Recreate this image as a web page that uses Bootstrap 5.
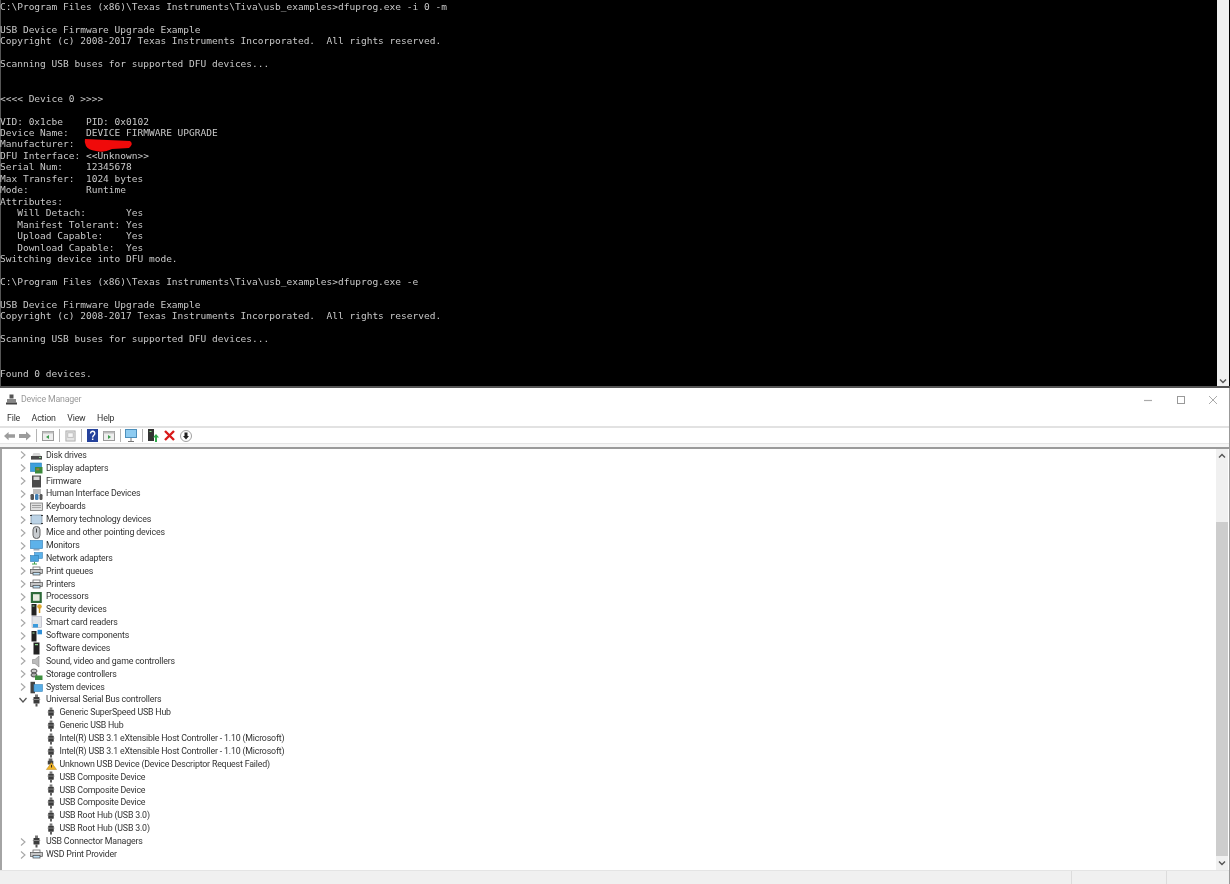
<!DOCTYPE html>
<html lang="en">
<head>
<meta charset="utf-8">
<title>Device Manager</title>
<link href="https://cdn.jsdelivr.net/npm/bootstrap@5.3.0/dist/css/bootstrap.min.css" rel="stylesheet">
<style>
html,body{height:884px;overflow:hidden;background:#fff}
.screen{width:1230px;height:884px}
.console-win{height:388px;background:#000;border-bottom:2px solid #555;box-shadow:inset 1px 0 #555;position:relative}
.cmd-out{flex:1;margin:0;padding-top:1px;overflow:hidden;color:#c8c8c8;font:9.52px/11.45px "DejaVu Sans Mono",monospace;white-space:pre;filter:blur(.3px)}
.con-scroll{width:12px;background:#f0f0f0;margin-right:1px}
.redact{position:absolute;left:82px;top:138px;width:52px;height:15px}
.dm-win{flex:1;min-height:0;font-family:Roboto,"Noto Sans",sans-serif;font-size:8.8px;letter-spacing:-.18px;color:#333;border-right:1px solid #999}
.dm-text{filter:blur(.25px)}
.title-row{height:23px;padding-left:6px;gap:4px;background:#fff;color:#9a9a9a;font-size:8.8px;flex:none}
.wctl{margin-left:auto;width:73px;margin-right:12px;color:#999}
.menu-row{height:17px;padding-left:7px;gap:11.5px;flex:none;border-bottom:2px solid #e2e2e2}
.tool-row{height:16px;padding-left:3.5px;gap:4.9px;flex:none;background:#fff;border-bottom:1px solid #e6e6e6}
.tool-sep{width:1px;height:13px;background:#b4b4b4}
.tool-gap{height:5px;flex:none;background:#f6f6f6;border-bottom:2px solid #9a9a9a}
.tree-zone{flex:1;min-height:0;border-left:2px solid #a4a4a4}
.tree-list{flex:1;margin:0;padding:0;list-style:none;overflow:hidden}
.tree-item{height:12.887px;padding-left:16px;white-space:nowrap}
.tree-item.sub{padding-left:42.500px}
.exp{width:10px;flex:none;margin-right:2px}
.tree-item.sub .exp{display:none}
.tree-ico{width:13px;height:13px;flex:none;margin-right:3px}
.tree-item.sub .tree-ico{width:12px;height:12px;margin-right:3px}
.tree-scroll{width:12px;flex:none;background:#f0f0f0;margin-right:1px}
.thumb{height:334px;background:#cdcdcd;margin-top:auto}
.arrow-box{height:14px;flex:none}
.status-row{height:14px;flex:none;background:#f0f0f0;border-top:1px solid #e4e4e4}
.status-cell{border-right:1px solid #dcdcdc}
.st-mid{width:95px}.st-end{width:62px}
</style>
</head>
<body>
<svg width="0" height="0" class="position-absolute">
<defs>
<symbol id="disk" viewBox="0 0 13 13"><path d="M2 7l1.500-3h6L11 7z" fill="#d8d8d8"/><rect x="1" y="7" width="11" height="3.600" fill="#4a4a4a"/><rect x="9" y="8" width="2" height="1" fill="#8fd08f"/></symbol>
<symbol id="display" viewBox="0 0 13 13"><rect x=".5" y="1" width="11" height="8.500" fill="#3f9fdc" stroke="#2b7fb5" stroke-width=".6"/><rect x="5" y="5" width="7.500" height="6.500" fill="#3c8a3c"/><rect x="6.300" y="6.300" width="3" height="2" fill="#9c7b3b"/></symbol>
<symbol id="firmware" viewBox="0 0 13 13"><rect x="2" y=".5" width="9" height="12" fill="#4b4b4b"/><rect x="3.500" y="1.600" width="6" height="3.400" fill="#d9d9d9"/></symbol>
<symbol id="hid" viewBox="0 0 13 13"><path d="M3 1h8v5H3z" fill="#bdbdbd"/><rect x=".5" y="6" width="3.500" height="6" rx="1.300" fill="#555"/><rect x="5" y="6" width="3.500" height="6" rx="1.300" fill="#3f7fb5"/><rect x="9.500" y="6" width="3" height="6" rx="1.200" fill="#555"/></symbol>
<symbol id="keyb" viewBox="0 0 13 13"><rect x=".5" y="3" width="12" height="7.500" fill="#e0e0e0" stroke="#777" stroke-width=".8"/><rect x="2" y="5" width="9" height="1" fill="#999"/><rect x="2" y="7" width="9" height="1" fill="#aaa"/></symbol>
<symbol id="memory" viewBox="0 0 13 13"><rect x="1" y="2" width="11" height="9" fill="#bcd3e6" stroke="#6b7f8f" stroke-width=".6"/><path d="M0 2.500h2M0 10.500h2M11 2.500h2M11 10.500h2" stroke="#333"/></symbol>
<symbol id="mouse" viewBox="0 0 13 13"><rect x="3" y=".5" width="7" height="12" rx="3.300" fill="#c8ccd0" stroke="#555" stroke-width=".9"/><rect x="6" y="2.500" width="1" height="4" fill="#444"/></symbol>
<symbol id="monitor" viewBox="0 0 13 13"><rect x=".5" y="1.500" width="12" height="8" fill="#5db2ea" stroke="#3c87bd" stroke-width=".7"/><rect x="3.500" y="10" width="6" height="1.500" fill="#9ab"/></symbol>
<symbol id="network" viewBox="0 0 13 13"><rect x="4.500" y=".5" width="8" height="6" fill="#5db2ea" stroke="#3c87bd" stroke-width=".6"/><rect x=".5" y="3.500" width="8" height="6" fill="#4aa4e0" stroke="#2f7cb0" stroke-width=".6"/><path d="M4.500 10v2M2 12h5" stroke="#3fa04a"/></symbol>
<symbol id="printer" viewBox="0 0 13 13"><rect x="3" y="2" width="7" height="2.500" fill="#fff" stroke="#555" stroke-width=".7"/><rect x=".5" y="4.500" width="12" height="4" fill="#c6c6c6" stroke="#555" stroke-width=".7"/><rect x="3" y="7.500" width="7" height="2.500" fill="#bfe0f5" stroke="#444" stroke-width=".7"/></symbol>
<symbol id="cpu" viewBox="0 0 13 13"><rect x=".8" y="1" width="11" height="11" fill="#2f6b3a"/><rect x="3" y="3.200" width="6.600" height="6.600" fill="#e8ece0"/></symbol>
<symbol id="security" viewBox="0 0 13 13"><rect x="1.500" y="1" width="5" height="11.500" fill="#222"/><rect x="2.500" y="2.500" width="2" height="1" fill="#9ee39e"/><circle cx="9.500" cy="3.500" r="2.300" fill="#e0a92e"/><rect x="8.800" y="4" width="1.500" height="6" fill="#d49b25"/></symbol>
<symbol id="smart" viewBox="0 0 13 13"><rect x="2" y=".5" width="9.500" height="11" fill="#e1e4e8" stroke="#aab" stroke-width=".6"/><rect x="3" y="8" width="5" height="3.500" fill="#3a9bdc"/></symbol>
<symbol id="swcomp" viewBox="0 0 13 13"><rect x="1.500" y="2" width="5" height="10.500" fill="#222"/><rect x="2.500" y="3.500" width="2" height="1" fill="#9ee39e"/><rect x="7.500" y=".8" width="4.500" height="4.500" fill="#2f8fd8"/></symbol>
<symbol id="swdev" viewBox="0 0 13 13"><rect x="3.500" y=".5" width="6" height="12" fill="#222"/><rect x="5" y="2" width="3" height="1.200" fill="#8fe08f"/></symbol>
<symbol id="sound" viewBox="0 0 13 13"><path d="M2.500 4.500h2.500l4-3.500v11l-4-3.500H2.500z" fill="#bbb" stroke="#888" stroke-width=".6"/></symbol>
<symbol id="storage" viewBox="0 0 13 13"><ellipse cx="4" cy="3" rx="3" ry="2" fill="#ccc" stroke="#333" stroke-width=".8"/><ellipse cx="4" cy="7" rx="3" ry="2" fill="#aaa" stroke="#333" stroke-width=".8"/><rect x="5" y="7.500" width="7.500" height="4.500" fill="#3f8f3f"/></symbol>
<symbol id="system" viewBox="0 0 13 13"><rect x=".5" y=".8" width="4.500" height="11.500" fill="#444"/><rect x="4" y="3.500" width="8.500" height="7" fill="#58ade6" stroke="#3c87bd" stroke-width=".6"/></symbol>
<symbol id="usb" viewBox="0 0 13 13"><rect x="5" y=".5" width="3" height="2.500" fill="#777"/><rect x="3.500" y="3" width="6" height="6.500" rx=".5" fill="#3c3c3c"/><rect x="5.500" y="9.500" width="2" height="3" fill="#555"/><rect x="2.800" y="5" width="7.400" height="1" fill="#888"/></symbol>
<symbol id="warn" viewBox="0 0 13 13"><rect x="4" y=".5" width="4" height="4" fill="#666"/><rect x="3" y="3" width="6" height="4" fill="#444"/><path d="M7 5l5.500 7.500H1.500z" fill="#f0b429" stroke="#b07d10" stroke-width=".5"/><rect x="6.600" y="7.500" width="1" height="2.800" fill="#222"/></symbol>
<symbol id="chev-r" viewBox="0 0 10 10"><path d="M3 1.500L7 5 3 8.500" fill="none" stroke="#a6a6a6" stroke-width="1.100"/></symbol>
<symbol id="chev-d" viewBox="0 0 10 10"><path d="M1.500 3L5 7 8.500 3" fill="none" stroke="#555" stroke-width="1.200"/></symbol>
</defs>
</svg>

<div class="screen d-flex flex-column">
  <div class="console-win d-flex flex-none">
<pre class="cmd-out">C:\Program Files (x86)\Texas Instruments\Tiva\usb_examples&gt;dfuprog.exe -i 0 -m

USB Device Firmware Upgrade Example
Copyright (c) 2008-2017 Texas Instruments Incorporated.  All rights reserved.

Scanning USB buses for supported DFU devices...


&lt;&lt;&lt;&lt; Device 0 &gt;&gt;&gt;&gt;

VID: 0x1cbe    PID: 0x0102
Device Name:   DEVICE FIRMWARE UPGRADE
Manufacturer:
DFU Interface: &lt;&lt;Unknown&gt;&gt;
Serial Num:    12345678
Max Transfer:  1024 bytes
Mode:          Runtime
Attributes:
   Will Detach:       Yes
   Manifest Tolerant: Yes
   Upload Capable:    Yes
   Download Capable:  Yes
Switching device into DFU mode.

C:\Program Files (x86)\Texas Instruments\Tiva\usb_examples&gt;dfuprog.exe -e

USB Device Firmware Upgrade Example
Copyright (c) 2008-2017 Texas Instruments Incorporated.  All rights reserved.

Scanning USB buses for supported DFU devices...


Found 0 devices.</pre>
    <div class="con-scroll d-flex flex-column justify-content-end align-items-center">
      <svg width="10" height="10" viewBox="0 0 10 10"><path d="M2 3.500L5 6.500 8 3.500" fill="none" stroke="#555" stroke-width="1.400"/></svg>
    </div>
    <svg class="redact" viewBox="0 0 52 15"><path d="M3 1L48 3Q52 6 47 10L30 11Q22 15 14 13 6 12 4 8 2 4 3 1z" fill="#f00a0a"/></svg>
  </div>

  <div class="dm-win d-flex flex-column">
    <div class="title-row d-flex align-items-center">
      <svg width="11" height="11" viewBox="0 0 11 11"><rect x="3.500" y=".5" width="4" height="4" fill="#555"/><rect x="1" y="5" width="9" height="3.500" fill="#888"/><rect x="0" y="8.500" width="11" height="2" fill="#444"/></svg>
      <span class="dm-text">Device Manager</span>
      <div class="wctl d-flex justify-content-between align-items-center">
        <svg width="8" height="8" viewBox="0 0 8 8"><path d="M0 4.500h8" stroke="#aaa" stroke-width="1.200"/></svg>
        <svg width="8" height="8" viewBox="0 0 8 8"><rect x=".5" y=".5" width="7" height="7" fill="none" stroke="#999"/></svg>
        <svg width="8" height="8" viewBox="0 0 8 8"><path d="M0 0l8 8M8 0L0 8" stroke="#aaa"/></svg>
      </div>
    </div>
    <div class="menu-row d-flex align-items-center">
      <span class="dm-text">File</span><span class="dm-text">Action</span><span class="dm-text">View</span><span class="dm-text">Help</span>
    </div>
    <div class="tool-row d-flex align-items-center">
      <svg width="11" height="12" viewBox="0 0 12 12"><path d="M0 6l5-4.500V4h7v4H5v2.500z" fill="#9c9c9c"/></svg>
      <svg width="12" height="12" viewBox="0 0 12 12"><path d="M12 6L7 1.500V4H0v4h7v2.500z" fill="#9c9c9c"/></svg>
      <span class="tool-sep"></span>
      <svg width="12" height="12" viewBox="0 0 12 12"><rect x=".5" y="1.500" width="11" height="9" fill="#eee" stroke="#999"/><rect x=".5" y="1.500" width="11" height="2" fill="#bbb"/><path d="M7 5v4L4 7z" fill="#3c9c4c"/></svg>
      <span class="tool-sep"></span>
      <svg width="11" height="12" viewBox="0 0 12 12"><rect x="1" y=".5" width="10" height="11" fill="#e4e4e4" stroke="#aaa"/><rect x="3" y="2.500" width="6" height="5" fill="#f5f5f5" stroke="#bbb"/></svg>
      <span class="tool-sep"></span>
      <svg width="11" height="13" viewBox="0 0 11 13"><rect width="11" height="13" fill="#25429c"/><path d="M3.500 4.500C3.500 1.500 7.800 1.500 7.800 4.500 7.800 6.300 5.600 6.300 5.600 8.500" fill="none" stroke="#fff" stroke-width="1.300"/><rect x="4.900" y="9.500" width="1.500" height="1.500" fill="#fff"/></svg>
      <svg width="12" height="12" viewBox="0 0 12 12"><rect x=".5" y="1.500" width="11" height="9" fill="#eee" stroke="#999"/><rect x=".5" y="1.500" width="11" height="2" fill="#bbb"/><path d="M5 5v4l3-2z" fill="#3c9c4c"/></svg>
      <span class="tool-sep"></span>
      <svg width="12" height="13" viewBox="0 0 12 13"><rect x=".5" y=".5" width="11" height="8" fill="#8ecbf0" stroke="#4d8fbb"/><path d="M3 12.500h6M6 9v3" stroke="#777"/></svg>
      <span class="tool-sep"></span>
      <svg width="11" height="13" viewBox="0 0 11 13"><rect x="0" y="0" width="6" height="12" fill="#333"/><rect x="1.500" y="2" width="2" height="1" fill="#8fe08f"/><path d="M8 5l3 3.500H9V13H7V8.500H5z" fill="#2fa84a"/></svg>
      <svg width="11" height="11" viewBox="0 0 11 11"><path d="M1 1l9 9M10 1l-9 9" stroke="#d81a1a" stroke-width="2.400"/></svg>
      <svg width="12" height="12" viewBox="0 0 12 12"><circle cx="6" cy="6" r="5.500" fill="#fff" stroke="#888" stroke-width=".8"/><path d="M4.500 2.500h3V6H9L6 9.500 3 6h1.500z" fill="#222"/></svg>
    </div>
    <div class="tool-gap"></div>

    <div class="tree-zone d-flex">
      <ul class="tree-list dm-text">
        <li class="tree-item d-flex align-items-center"><svg class="exp" height="10"><use href="#chev-r"/></svg><svg class="tree-ico"><use href="#disk"/></svg>Disk drives</li>
        <li class="tree-item d-flex align-items-center"><svg class="exp" height="10"><use href="#chev-r"/></svg><svg class="tree-ico"><use href="#display"/></svg>Display adapters</li>
        <li class="tree-item d-flex align-items-center"><svg class="exp" height="10"><use href="#chev-r"/></svg><svg class="tree-ico"><use href="#firmware"/></svg>Firmware</li>
        <li class="tree-item d-flex align-items-center"><svg class="exp" height="10"><use href="#chev-r"/></svg><svg class="tree-ico"><use href="#hid"/></svg>Human Interface Devices</li>
        <li class="tree-item d-flex align-items-center"><svg class="exp" height="10"><use href="#chev-r"/></svg><svg class="tree-ico"><use href="#keyb"/></svg>Keyboards</li>
        <li class="tree-item d-flex align-items-center"><svg class="exp" height="10"><use href="#chev-r"/></svg><svg class="tree-ico"><use href="#memory"/></svg>Memory technology devices</li>
        <li class="tree-item d-flex align-items-center"><svg class="exp" height="10"><use href="#chev-r"/></svg><svg class="tree-ico"><use href="#mouse"/></svg>Mice and other pointing devices</li>
        <li class="tree-item d-flex align-items-center"><svg class="exp" height="10"><use href="#chev-r"/></svg><svg class="tree-ico"><use href="#monitor"/></svg>Monitors</li>
        <li class="tree-item d-flex align-items-center"><svg class="exp" height="10"><use href="#chev-r"/></svg><svg class="tree-ico"><use href="#network"/></svg>Network adapters</li>
        <li class="tree-item d-flex align-items-center"><svg class="exp" height="10"><use href="#chev-r"/></svg><svg class="tree-ico"><use href="#printer"/></svg>Print queues</li>
        <li class="tree-item d-flex align-items-center"><svg class="exp" height="10"><use href="#chev-r"/></svg><svg class="tree-ico"><use href="#printer"/></svg>Printers</li>
        <li class="tree-item d-flex align-items-center"><svg class="exp" height="10"><use href="#chev-r"/></svg><svg class="tree-ico"><use href="#cpu"/></svg>Processors</li>
        <li class="tree-item d-flex align-items-center"><svg class="exp" height="10"><use href="#chev-r"/></svg><svg class="tree-ico"><use href="#security"/></svg>Security devices</li>
        <li class="tree-item d-flex align-items-center"><svg class="exp" height="10"><use href="#chev-r"/></svg><svg class="tree-ico"><use href="#smart"/></svg>Smart card readers</li>
        <li class="tree-item d-flex align-items-center"><svg class="exp" height="10"><use href="#chev-r"/></svg><svg class="tree-ico"><use href="#swcomp"/></svg>Software components</li>
        <li class="tree-item d-flex align-items-center"><svg class="exp" height="10"><use href="#chev-r"/></svg><svg class="tree-ico"><use href="#swdev"/></svg>Software devices</li>
        <li class="tree-item d-flex align-items-center"><svg class="exp" height="10"><use href="#chev-r"/></svg><svg class="tree-ico"><use href="#sound"/></svg>Sound, video and game controllers</li>
        <li class="tree-item d-flex align-items-center"><svg class="exp" height="10"><use href="#chev-r"/></svg><svg class="tree-ico"><use href="#storage"/></svg>Storage controllers</li>
        <li class="tree-item d-flex align-items-center"><svg class="exp" height="10"><use href="#chev-r"/></svg><svg class="tree-ico"><use href="#system"/></svg>System devices</li>
        <li class="tree-item d-flex align-items-center"><svg class="exp" height="10"><use href="#chev-d"/></svg><svg class="tree-ico"><use href="#usb"/></svg>Universal Serial Bus controllers</li>
        <li class="tree-item sub d-flex align-items-center"><svg class="tree-ico"><use href="#usb"/></svg>Generic SuperSpeed USB Hub</li>
        <li class="tree-item sub d-flex align-items-center"><svg class="tree-ico"><use href="#usb"/></svg>Generic USB Hub</li>
        <li class="tree-item sub d-flex align-items-center"><svg class="tree-ico"><use href="#usb"/></svg>Intel(R) USB 3.1 eXtensible Host Controller - 1.10 (Microsoft)</li>
        <li class="tree-item sub d-flex align-items-center"><svg class="tree-ico"><use href="#usb"/></svg>Intel(R) USB 3.1 eXtensible Host Controller - 1.10 (Microsoft)</li>
        <li class="tree-item sub d-flex align-items-center"><svg class="tree-ico"><use href="#warn"/></svg>Unknown USB Device (Device Descriptor Request Failed)</li>
        <li class="tree-item sub d-flex align-items-center"><svg class="tree-ico"><use href="#usb"/></svg>USB Composite Device</li>
        <li class="tree-item sub d-flex align-items-center"><svg class="tree-ico"><use href="#usb"/></svg>USB Composite Device</li>
        <li class="tree-item sub d-flex align-items-center"><svg class="tree-ico"><use href="#usb"/></svg>USB Composite Device</li>
        <li class="tree-item sub d-flex align-items-center"><svg class="tree-ico"><use href="#usb"/></svg>USB Root Hub (USB 3.0)</li>
        <li class="tree-item sub d-flex align-items-center"><svg class="tree-ico"><use href="#usb"/></svg>USB Root Hub (USB 3.0)</li>
        <li class="tree-item d-flex align-items-center"><svg class="exp" height="10"><use href="#chev-r"/></svg><svg class="tree-ico"><use href="#usb"/></svg>USB Connector Managers</li>
        <li class="tree-item d-flex align-items-center"><svg class="exp" height="10"><use href="#chev-r"/></svg><svg class="tree-ico"><use href="#printer"/></svg>WSD Print Provider</li>
      </ul>
      <div class="tree-scroll d-flex flex-column">
        <div class="arrow-box d-flex align-items-center justify-content-center"><svg width="10" height="10" viewBox="0 0 10 10"><path d="M2 6.500L5 3.500 8 6.500" fill="none" stroke="#555" stroke-width="1.400"/></svg></div>
        <div class="thumb"></div>
        <div class="arrow-box d-flex align-items-center justify-content-center"><svg width="10" height="10" viewBox="0 0 10 10"><path d="M2 3.500L5 6.500 8 3.500" fill="none" stroke="#555" stroke-width="1.400"/></svg></div>
      </div>
    </div>
    <div class="status-row d-flex">
      <div class="status-cell flex-grow-1"></div>
      <div class="status-cell st-mid"></div>
      <div class="st-end"></div>
    </div>
  </div>
</div>
</body>
</html>
